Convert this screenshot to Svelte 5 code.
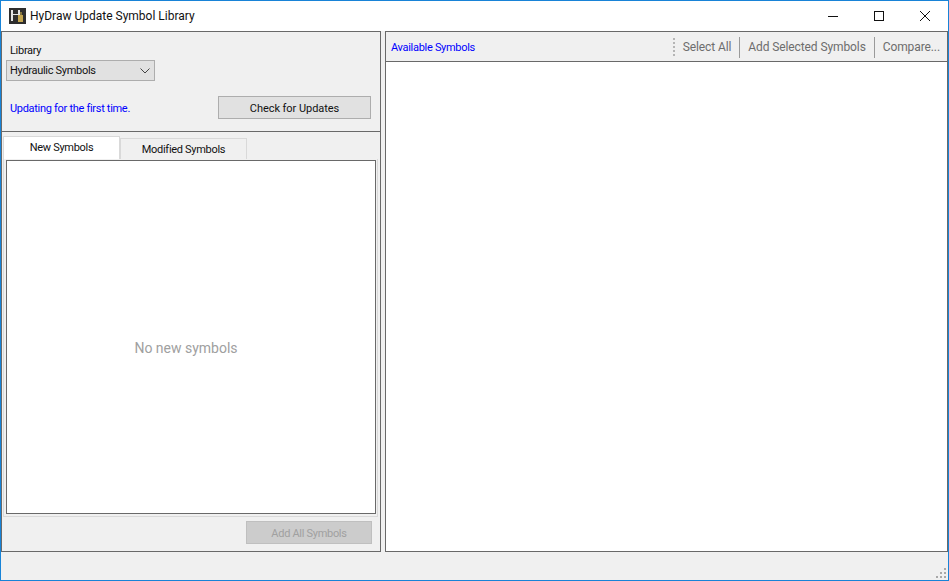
<script>
  let library = 'Hydraulic Symbols';
  let statusText = 'Updating for the first time.';
  let activeTab = 'new';
  const tools = ['Select All', 'Add Selected Symbols', 'Compare...'];
</script>

<div class="window">
  <header class="titlebar">
    <svg class="appicon" width="17" height="16" viewBox="0 0 17 16">
      <rect width="17" height="16" fill="#2e2e2e" />
      <path d="M2 2h2v11H2zM9 2h2v5H9zM4 6h5v1H4z" fill="#e4e4e4" />
      <rect x="9" y="7" width="5" height="7" fill="#c4a650" />
      <rect x="11" y="4" width="2" height="3" fill="#85743e" />
    </svg>
    <span class="title">HyDraw Update Symbol Library</span>
    <div class="controls">
      <span class="ctl">
        <svg width="12" height="12" viewBox="0 0 12 12"><path d="M1 6.5h10" stroke="#111" fill="none" /></svg>
      </span>
      <span class="ctl">
        <svg width="12" height="12" viewBox="0 0 12 12"><rect x="1.5" y="1.500" width="9" height="9" stroke="#111" fill="none" /></svg>
      </span>
      <span class="ctl">
        <svg width="12" height="12" viewBox="0 0 12 12"><path d="M1 1l10 10M11 1L1 11" stroke="#111" fill="none" /></svg>
      </span>
    </div>
  </header>

  <div class="main">
    <section class="panel left">
      <div class="top">
        <label class="lib-label" for="lib">Library</label>
        <div class="combo" id="lib">
          <span>{library}</span>
          <svg width="10" height="6" viewBox="0 0 10 6"><path d="M.5.5L5 5 9.500.5" stroke="#444" fill="none" /></svg>
        </div>
        <div class="status-row">
          <span class="status">{statusText}</span>
          <button class="btn check">Check for Updates</button>
        </div>
      </div>

      <div class="bottom">
        <div class="tabs">
          <button class="tab" class:active={activeTab === 'new'} onclick={() => (activeTab = 'new')}>New Symbols</button>
          <button class="tab" class:active={activeTab === 'mod'} onclick={() => (activeTab = 'mod')}>Modified Symbols</button>
        </div>
        <div class="tabpage">
          <div class="list">
            <span>{activeTab === 'new' ? 'No new symbols' : 'No modified symbols'}</span>
          </div>
        </div>
        <div class="actions">
          <button class="btn addall" disabled>Add All Symbols</button>
        </div>
      </div>
    </section>

    <section class="panel right">
      <div class="toolbar">
        <span class="avail">Available Symbols</span>
        <div class="tools">
          <span class="grip"></span>
          {#each tools as t, i}
            {#if i > 0}<span class="sep"></span>{/if}
            <span class="tool">{t}</span>
          {/each}
        </div>
      </div>
      <div class="content"></div>
    </section>
  </div>

  <footer class="statusbar">
    <svg width="12" height="12" viewBox="0 0 12 12" fill="#a8a8a8">
      <rect x="9" y="1" width="2" height="2" />
      <rect x="5" y="5" width="2" height="2" />
      <rect x="9" y="5" width="2" height="2" />
      <rect x="1" y="9" width="2" height="2" />
      <rect x="5" y="9" width="2" height="2" />
      <rect x="9" y="9" width="2" height="2" />
    </svg>
  </footer>
</div>

<style>
  :global(body) {
    margin: 0;
    background: #f0f0f0;
  }

  .window {
    box-sizing: border-box;
    width: 949px;
    height: 581px;
    border: 1px solid #1883d7;
    display: flex;
    flex-direction: column;
    font-family: Roboto, "Open Sans", sans-serif;
    font-size: 11px;
    letter-spacing: -0.3px;
    color: #111;
    background: #f0f0f0;
    overflow: hidden;
  }

  .titlebar {
    height: 30px;
    flex: none;
    background: #fff;
    display: flex;
    align-items: center;
    padding-left: 8px;
  }
  .appicon {
    margin-right: 4px;
    margin-top: -1px;
  }
  .title {
    font-size: 12px;
    letter-spacing: 0;
    margin-top: -1px;
  }
  .controls {
    margin-left: auto;
    display: flex;
  }
  .ctl {
    width: 46px;
    height: 30px;
    display: flex;
    align-items: center;
    justify-content: center;
  }

  .main {
    height: 521px;
    flex: none;
    display: flex;
    gap: 4px;
  }
  .panel {
    box-sizing: border-box;
    border: 1px solid #696969;
    display: flex;
    flex-direction: column;
  }
  .left {
    width: 380px;
    flex: none;
  }
  .right {
    width: 563px;
    flex: none;
  }

  .top {
    height: 100px;
    flex: none;
    box-sizing: border-box;
    border-bottom: 1px solid #696969;
    padding: 11px 9px 0 4px;
  }
  .lib-label {
    display: block;
    height: 17px;
    line-height: 15px;
    padding-left: 4px;
  }
  .combo {
    box-sizing: border-box;
    width: 149px;
    height: 21px;
    background: #e1e1e1;
    border: 1px solid #adadad;
    display: flex;
    align-items: center;
    justify-content: space-between;
    padding: 0 4px 0 3px;
  }
  .status-row {
    display: flex;
    justify-content: space-between;
    align-items: center;
    margin-top: 15px;
    padding-left: 4px;
  }
  .status {
    color: #0000ff;
    padding-top: 1px;
  }
  .btn {
    box-sizing: border-box;
    font: inherit;
    letter-spacing: inherit;
    background: #e1e1e1;
    border: 1px solid #adadad;
    color: #111;
    padding: 1px 0 0;
  }
  .check {
    width: 153px;
    height: 23px;
    letter-spacing: -0.05px;
  }

  .bottom {
    flex: 1;
    display: flex;
    flex-direction: column;
    padding: 3px 2px 0 1px;
    min-height: 0;
  }
  .tabs {
    display: flex;
    align-items: flex-end;
    height: 24px;
    flex: none;
  }
  .tab {
    box-sizing: border-box;
    font: inherit;
    letter-spacing: inherit;
    color: #111;
    height: 21px;
    width: 127px;
    background: #f0f0f0;
    border: 1px solid #d9d9d9;
    border-bottom: none;
    padding: 0;
  }
  .tab.active {
    height: 23px;
    width: 117px;
    background: #fff;
    padding-bottom: 2px;
  }
  .tabpage {
    box-sizing: border-box;
    height: 358px;
    flex: none;
    border: 1px solid #d9d9d9;
    border-top: none;
    padding: 1px 1px 2px 2px;
  }
  .list {
    box-sizing: border-box;
    height: 100%;
    background: #fff;
    border: 1px solid #696969;
    display: flex;
    align-items: center;
    justify-content: center;
    color: #a0a0a0;
    font-size: 14px;
    letter-spacing: 0;
    padding: 22px 10px 0 0;
  }
  .actions {
    display: flex;
    justify-content: flex-end;
    padding: 4px 6px 0 0;
  }
  .addall {
    width: 126px;
    height: 23px;
    background: #cccccc;
    border-color: #bfbfbf;
    color: #a0a0a0;
  }

  .toolbar {
    height: 30px;
    flex: none;
    box-sizing: border-box;
    border-bottom: 1px solid #696969;
    display: flex;
    align-items: center;
    justify-content: space-between;
    padding: 1px 7px 0 5px;
  }
  .avail {
    color: #0000ff;
  }
  .tools {
    display: flex;
    align-items: center;
    height: 100%;
    color: #6d6d6d;
    font-size: 12px;
    letter-spacing: -0.1px;
  }
  .grip {
    width: 2px;
    height: 18px;
    margin-right: 8px;
    background: repeating-linear-gradient(to bottom, #b5b5b5 0 2px, transparent 2px 4px);
  }
  .tool {
    white-space: nowrap;
  }
  .sep {
    width: 1px;
    height: 21px;
    background: #9a9a9a;
    margin: 0 8px;
  }
  .content {
    flex: 1;
    background: #fff;
  }

  .statusbar {
    flex: 1;
    display: flex;
    justify-content: flex-end;
    align-items: flex-end;
    padding: 0 1px 1px 0;
  }
</style>
